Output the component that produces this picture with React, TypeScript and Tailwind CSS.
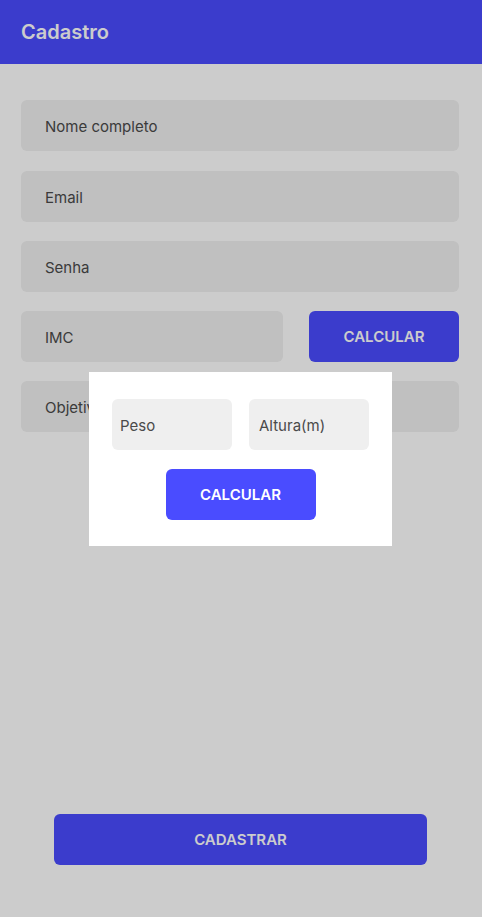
import React from 'react';

const Field = ({ label, className = '' }: { label: string; className?: string }) => (
    <div className={`h-[51px] rounded-md bg-[#f0f0f0] flex items-center pl-6 pt-1 text-[15px] text-[#4a4a4a] ${className}`}>
        {label}
    </div>
);

const App: React.FC = () => {
    return (
        <div className="relative h-[917px] w-full bg-white flex flex-col font-['Inter',sans-serif]">
            <header className="h-16 bg-[#4a4cff] flex items-center px-[21px]">
                <h1 className="text-white text-[20px] font-semibold">Cadastro</h1>
            </header>

            <main className="flex-1 flex flex-col pl-[21px] pr-[23px] pt-9">
                <Field label="Nome completo" />
                <Field label="Email" className="mt-5" />
                <Field label="Senha" className="mt-[19px]" />
                <div className="flex gap-[26px] mt-[19px]">
                    <Field label="IMC" className="flex-1" />
                    <button className="w-[150px] h-[51px] rounded-md bg-[#4a4cff] text-white text-[15px] font-semibold pt-0.5">
                        CALCULAR
                    </button>
                </div>
                <Field label="Objetivo" className="mt-[19px]" />
            </main>

            <div className="flex justify-center pb-[52px] pr-px">
                <button className="w-[373px] h-[51px] rounded-md bg-[#4a4cff] text-white text-[15px] font-semibold pt-0.5">
                    CADASTRAR
                </button>
            </div>

            {/* overlay + modal */}
            <div className="absolute inset-0 bg-black/20 flex items-center justify-center pr-px">
                <div className="w-[303px] h-[174px] bg-white pt-[27px] px-[23px] flex flex-col items-center">
                    <div className="flex gap-[17px] w-full">
                        <div className="w-[120px] h-[51px] rounded-md bg-[#efefef] flex items-center pl-2 pt-1 text-[15px] text-[#4a4a4a]">Peso</div>
                        <div className="w-[120px] h-[51px] rounded-md bg-[#efefef] flex items-center pl-2.5 pt-1 text-[15px] text-[#4a4a4a]">Altura(m)</div>
                    </div>
                    <button className="mt-[19px] w-[150px] h-[51px] rounded-md bg-[#4a4cff] text-white text-[15px] font-semibold pt-0.5">
                        CALCULAR
                    </button>
                </div>
            </div>
        </div>
    );
};

export default App;
